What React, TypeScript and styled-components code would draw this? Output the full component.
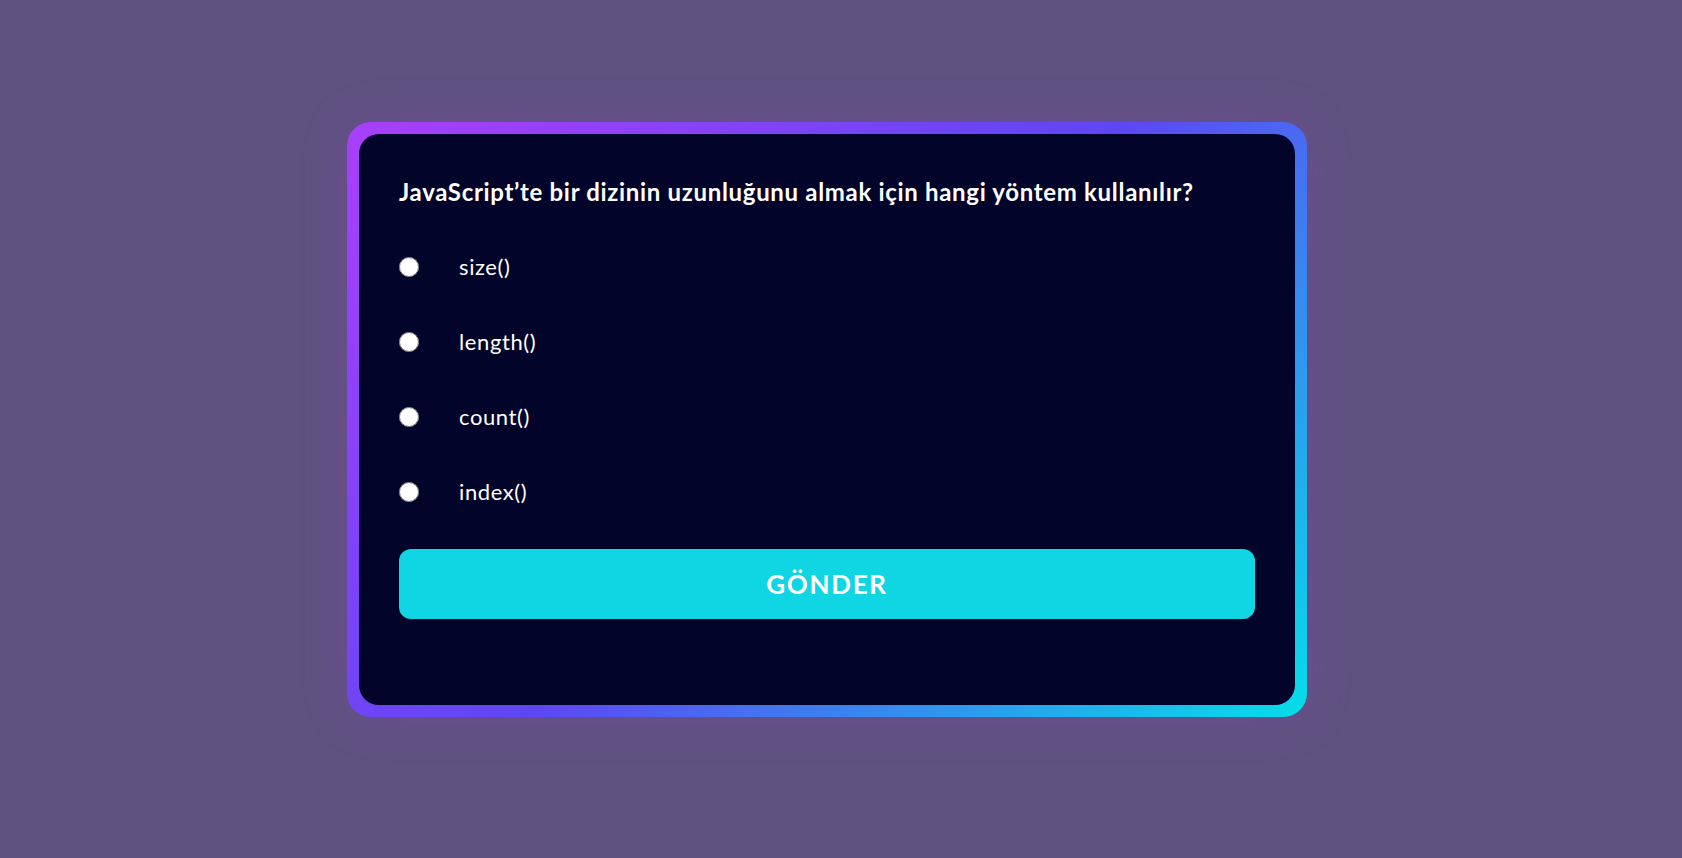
import React from "react";
import styled, { createGlobalStyle } from "styled-components";

const Global = createGlobalStyle`
  html, body { margin: 0; padding: 0; }
  body {
    background: #5f5280;
    font-family: Lato, "Noto Sans", sans-serif;
  }
`;

const Page = styled.div`
  min-height: 100vh;
  box-sizing: border-box;
  display: flex;
  justify-content: center;
  align-items: center;
  padding: 0 28px 19px 0;
`;

const Frame = styled.div`
  width: 960px;
  height: 595px;
  box-sizing: border-box;
  padding: 12px;
  border-radius: 24px;
  background: linear-gradient(135deg, #aa3ffb 0%, #5e46f4 50%, #05dee9 100%);
  box-shadow: 0 0 40px rgba(125, 70, 170, 0.45);
`;

const Card = styled.div`
  height: 100%;
  box-sizing: border-box;
  background: #03042a;
  border-radius: 20px;
  padding: 43px 40px 40px;
  display: flex;
  flex-direction: column;
`;

const Question = styled.h2`
  margin: 0;
  color: #ffffff;
  font-size: 24px;
  font-weight: 700;
  letter-spacing: 0.68px;
  line-height: 30px;
`;

const Options = styled.div`
  display: flex;
  flex-direction: column;
  margin-top: 22px;
`;

const Option = styled.label`
  display: flex;
  align-items: center;
  height: 75px;
  gap: 40px;
  color: #ffffff;
  font-size: 22px;
  letter-spacing: 0.6px;
  cursor: pointer;
`;

const Radio = styled.input`
  width: 20px;
  height: 20px;
  margin: 0;
`;

const Submit = styled.button`
  margin-top: 20px;
  height: 70px;
  border: none;
  border-radius: 12px;
  background: #10d5e3;
  color: #ffffff;
  font-family: Lato, "Noto Sans", sans-serif;
  font-size: 26px;
  font-weight: 700;
  letter-spacing: 1.7px;
  cursor: pointer;
`;

const options = ["size()", "length()", "count()", "index()"];

export default function App() {
  return (
    <>
      <Global />
      <Page>
        <Frame>
          <Card>
            <Question>JavaScript’te bir dizinin uzunluğunu almak için hangi yöntem kullanılır?</Question>
            <Options>
              {options.map((o) => (
                <Option key={o}>
                  <Radio type="radio" name="answer" value={o} />
                  {o}
                </Option>
              ))}
            </Options>
            <Submit>GÖNDER</Submit>
          </Card>
        </Frame>
      </Page>
    </>
  );
}
